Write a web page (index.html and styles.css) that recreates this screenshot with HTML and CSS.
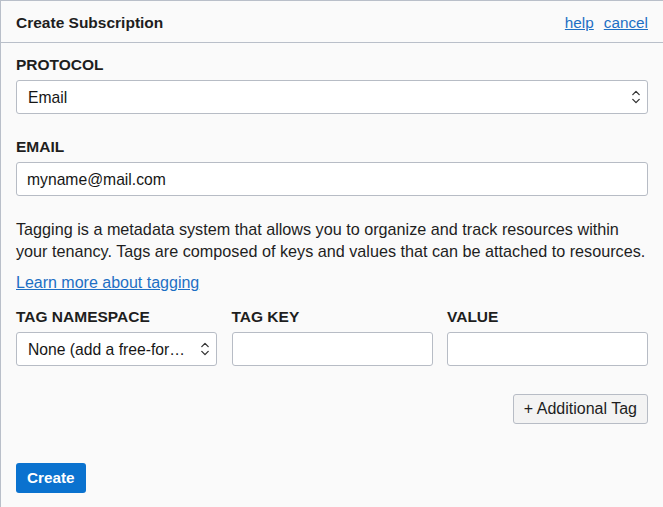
FILE: index.html
```html
<!DOCTYPE html>
<html lang="en">
<head>
<meta charset="utf-8">
<title>Create Subscription</title>
<link rel="stylesheet" href="styles.css">
</head>
<body>
<div class="panel">
  <header class="header">
    <h1 class="title">Create Subscription</h1>
    <nav class="header-links">
      <a href="#" class="link">help</a>
      <a href="#" class="link">cancel</a>
    </nav>
  </header>
  <main class="content">
    <div class="field">
      <label class="label">PROTOCOL</label>
      <div class="select">
        <span class="select-text">Email</span>
        <svg class="chev" width="8" height="14" viewBox="0 0 8 14"><path d="M0.8 4.6 L4 1.4 L7.2 4.6 M0.8 9.4 L4 12.6 L7.2 9.4" fill="none" stroke="#333" stroke-width="1.3" stroke-linecap="round" stroke-linejoin="round"/></svg>
      </div>
    </div>
    <div class="field field-email">
      <label class="label">EMAIL</label>
      <div class="input">myname@mail.com</div>
    </div>
    <p class="desc">Tagging is a metadata system that allows you to organize and track resources within your tenancy. Tags are composed of keys and values that can be attached to resources.</p>
    <a href="#" class="link learn">Learn more about tagging</a>
    <div class="tags">
      <div class="tag-col">
        <label class="label">TAG NAMESPACE</label>
        <div class="select">
          <span class="select-text">None (add a free-for…</span>
          <svg class="chev" width="8" height="14" viewBox="0 0 8 14"><path d="M0.8 4.6 L4 1.4 L7.2 4.6 M0.8 9.4 L4 12.6 L7.2 9.4" fill="none" stroke="#333" stroke-width="1.3" stroke-linecap="round" stroke-linejoin="round"/></svg>
        </div>
      </div>
      <div class="tag-col">
        <label class="label">TAG KEY</label>
        <div class="input"></div>
      </div>
      <div class="tag-col">
        <label class="label">VALUE</label>
        <div class="input"></div>
      </div>
    </div>
    <div class="add-row">
      <button class="btn-secondary">+ Additional Tag</button>
    </div>
    <div class="actions">
      <button class="btn-primary">Create</button>
    </div>
  </main>
</div>
</body>
</html>
```
FILE: styles.css
```css
* { box-sizing: border-box; }
html, body {
  margin: 0;
  padding: 0;
  height: 100%;
  background: #fafafa;
}
body {
  font-family: "Liberation Sans", Arial, Helvetica, sans-serif;
  font-size: 15px;
  color: #1e1e1e;
}
.panel {
  min-height: 100%;
  border-left: 1px solid #b9bfc9;
  border-top: 1px solid #b9bfc9;
  background: #fafafa;
}
.header {
  height: 42px;
  border-bottom: 1px solid #b9bfc9;
  display: flex;
  align-items: center;
  justify-content: space-between;
  padding: 2px 15px 0 15px;
}
.title {
  margin: 0;
  font-size: 15.5px;
  font-weight: bold;
  color: #1e1e1e;
}
.header-links {
  display: flex;
  gap: 10px;
}
.link {
  color: #1d6fc4;
  text-decoration: underline;
  font-size: 15.3px;
}
.content {
  padding: 12px 15px 20px 15px;
}
.label {
  display: block;
  font-weight: bold;
  font-size: 15.5px;
  line-height: 20px;
  margin-bottom: 5px;
  color: #1e1e1e;
}
.select, .input {
  height: 34px;
  border: 1px solid #b7bcc5;
  border-radius: 3px;
  background: #fff;
  display: flex;
  align-items: center;
  font-size: 15.7px;
  color: #161616;
}
.select {
  padding: 2px 7px 0 11px;
  gap: 8px;
}
.input {
  padding: 2px 10px 0 10px;
}
.select-text {
  flex: 1;
  min-width: 0;
  white-space: nowrap;
  overflow: hidden;
}
.chev {
  flex: none;
  margin-top: -2px;
}
.field-email {
  margin-top: 23px;
}
.desc {
  margin: 22px 0 0 0;
  line-height: 22px;
  font-size: 16.2px;
  color: #1e1e1e;
}
.learn {
  display: inline-block;
  line-height: 22px;
  margin-top: 10px;
  font-size: 16px;
}
.tags {
  margin-top: 13px;
  display: grid;
  grid-template-columns: repeat(3, minmax(0, 1fr));
  column-gap: 14.5px;
}
.tag-col {
  min-width: 0;
}
.add-row {
  display: flex;
  justify-content: flex-end;
  margin-top: 28px;
}
.btn-secondary {
  font-family: inherit;
  font-size: 16px;
  color: #1e1e1e;
  height: 30px;
  padding: 0 10px;
  background: #f3f3f3;
  border: 1px solid #b7bcc5;
  border-radius: 3px;
}
.actions {
  margin-top: 39px;
}
.btn-primary {
  font-family: inherit;
  font-size: 15.3px;
  font-weight: bold;
  color: #fff;
  background: #0a72cf;
  border: none;
  border-radius: 3px;
  height: 30px;
  padding: 0 11px;
}
```
